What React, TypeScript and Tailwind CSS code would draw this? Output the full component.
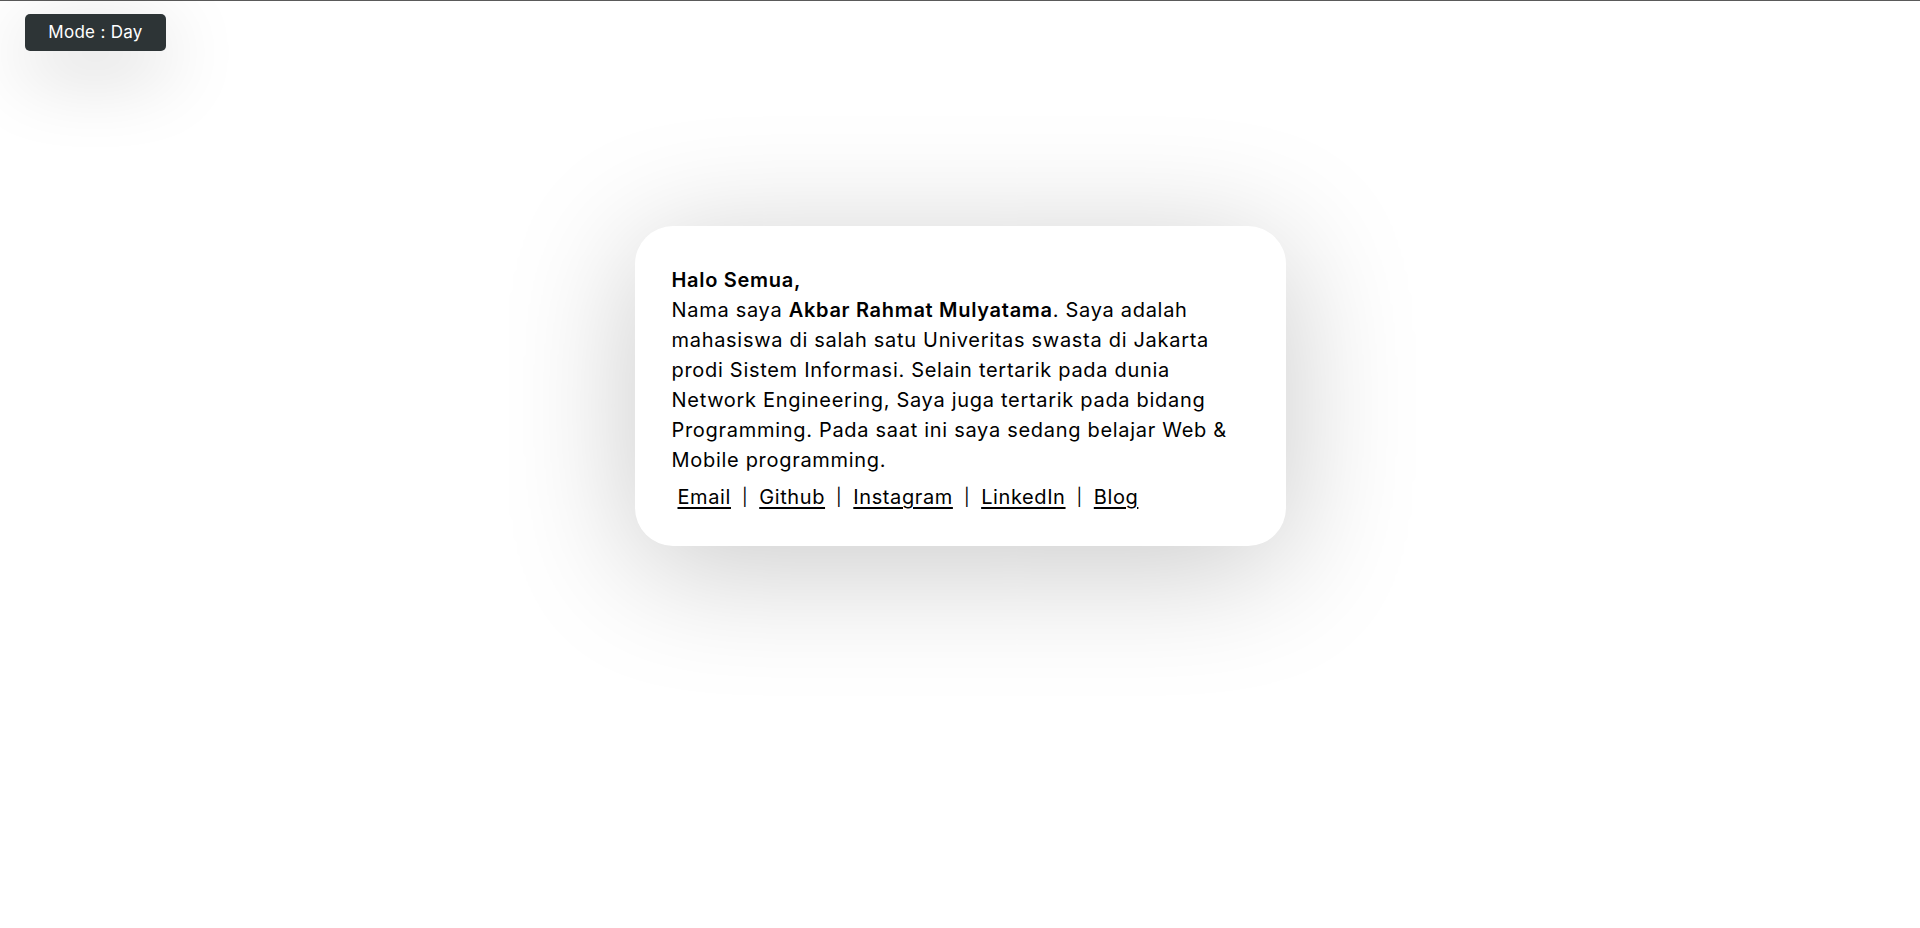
import React from "react";

export default function App() {
  const links = ["Email", "Github", "Instagram", "LinkedIn", "Blog"];
  return (
    <div
      className="min-h-[928px] w-full bg-white border-t border-[#5a5a5a] flex flex-col"
      style={{ fontFamily: "Inter, 'Noto Sans', sans-serif" }}
    >
      <div className="pl-[25px] pt-[13px]">
        <button className="w-[141px] h-[37px] rounded-[5px] bg-[#2d3436] text-white text-[17px] tracking-[0.3px] shadow-[0_20px_80px_rgba(0,0,0,0.2)]">
          Mode : Day
        </button>
      </div>
      <div className="flex justify-center mt-[175px]">
        <div className="w-[651px] h-[320px] rounded-[38px] bg-white shadow-[0_20px_130px_rgba(0,0,0,0.22)] pl-[37px] pr-[20px] pt-[39px] text-black">
          <p className="text-[20px] leading-[30px] tracking-[0.7px] whitespace-nowrap">
            <span className="font-semibold">Halo Semua,</span>
            <br />
            Nama saya <span className="font-semibold">Akbar Rahmat Mulyatama</span>. Saya adalah
            <br />
            mahasiswa di salah satu Univeritas swasta di Jakarta
            <br />
            prodi Sistem Informasi. Selain tertarik pada dunia
            <br />
            Network Engineering, Saya juga tertarik pada bidang
            <br />
            Programming. Pada saat ini saya sedang belajar Web &amp;
            <br />
            Mobile programming.
          </p>
          <div className="mt-[7px] flex items-center gap-[11px] pl-[6px] text-[20px] leading-[30px] tracking-[0.6px]">
            {links.map((l, i) => (
              <React.Fragment key={l}>
                {i > 0 && <span className="text-[17px]">|</span>}
                <a href="#" className="underline underline-offset-[3px] decoration-[1.5px]">
                  {l}
                </a>
              </React.Fragment>
            ))}
          </div>
        </div>
      </div>
    </div>
  );
}
